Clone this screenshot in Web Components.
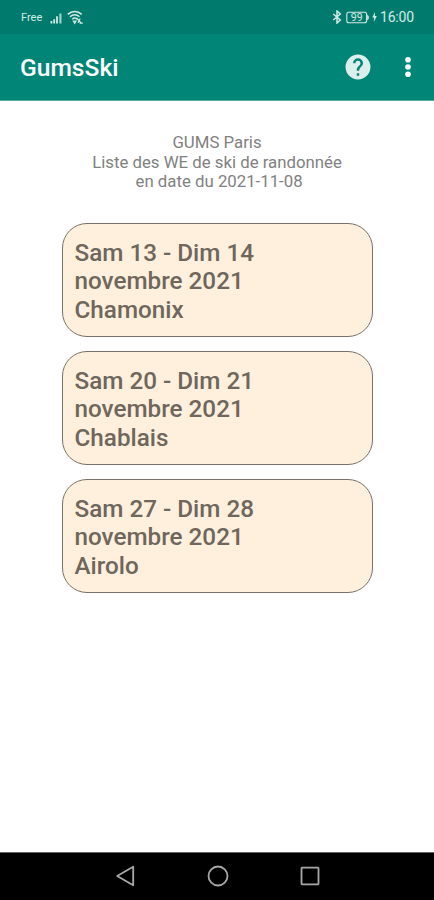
<!DOCTYPE html>
<html lang="fr">
<head>
<meta charset="utf-8">
<title>GumsSki</title>
<style>
html, body { margin: 0; height: 100%; }
body { font-family: Roboto, sans-serif; background: #fff; overflow: hidden; }
</style>
</head>
<body>
<gums-app></gums-app>
<script>
function define(name, html) {
  const template = document.createElement('template');
  template.innerHTML = html;
  customElements.define(name, class extends HTMLElement {
    constructor() {
      super();
      this.attachShadow({ mode: 'open' }).append(template.content.cloneNode(true));
    }
  });
}

define('status-bar', `
<style>
:host { display: flex; align-items: center; height: 34px; box-sizing: border-box; padding: 0 20px 0 21px; background: #007a6c; color: #d3ebe6; }
svg { display: block; flex: none; }
.carrier { font-size: 11px; line-height: 14px; width: 29px; padding-top: 1px; white-space: nowrap; }
.wifi { margin-left: 4px; }
.grow { flex: 1; }
.battery { margin-left: 4px; }
.bolt { margin-left: 2px; }
.time { font-size: 14px; line-height: 16px; margin-left: 3px; width: 34px; white-space: nowrap; letter-spacing: -0.2px; }
</style>
<span class="carrier">Free</span>
<svg width="13" height="13" viewBox="0 0 13 13" fill="currentColor"><path d="M.5 10h1.8v2.5H.5zM3.3 8.2h1.8v4.3H3.3zM6.1 5.2h1.8v7.3H6.1z"/><path d="M9.3 2.5h2.2v10H9.3z" opacity=".75"/></svg>
<svg class="wifi" width="17" height="15" viewBox="0 0 17 15" fill="none" stroke="currentColor" stroke-width="1.5"><path d="M.8 4.4C5 .6 10.5.6 14.7 4.4M3 6.8C6 4.2 9.6 4.2 12.5 6.8M5.3 9.2c1.4-1.3 3.4-1.3 4.8 0"/><path d="M6.4 11h2.6l-1.3 2.2zM9.5 8l4.6 4.8M13.2 8.5L11 12.8M12.6 13.2h3.2" stroke-width="1.2"/></svg>
<span class="grow"></span>
<svg width="10" height="14" viewBox="0 0 10 14" fill="none" stroke="currentColor" stroke-width="1.5"><path d="M1.3 4l7 6L5 13V1l3.3 3-7 6"/></svg>
<svg class="battery" width="24" height="13" viewBox="0 0 24 13"><rect x=".8" y="1.3" width="19.8" height="10.4" rx="2" fill="none" stroke="currentColor" stroke-width="1.1"/><path d="M21.3 4.2c1.7 0 1.7 4.6 0 4.6z" fill="currentColor" stroke="currentColor" stroke-width=".6"/><text x="10.7" y="10.2" text-anchor="middle" font-family="Roboto, sans-serif" font-size="10.5" fill="currentColor">99</text></svg>
<svg class="bolt" width="5" height="10" viewBox="0 0 5 10" fill="currentColor"><path d="M3 0L.3 5.6h1.8L1.8 10 4.8 4H2.9z"/></svg>
<span class="time">16:00</span>`);

define('app-bar', `
<style>
:host { display: flex; align-items: center; height: 67px; box-sizing: border-box; padding: 0 20px; background: #008577; color: #fff; border-bottom: 1px solid #58a99f; }
h1 { margin: 0; flex: 1; font-size: 24.6px; line-height: 30px; font-weight: 500; padding-top: 1px; }
svg { display: block; flex: none; }
.help { margin-right: 31.5px; }
</style>
<h1><slot></slot></h1>
<svg class="help" width="26" height="26" viewBox="0 0 24 24" fill="#dcefec"><path d="M12 .5a11.5 11.5 0 1 0 0 23 11.5 11.5 0 0 0 0-23zm1.15 19.55h-2.3v-2.3h2.3zm2.38-8.91l-1.03 1.06c-.83.84-1.35 1.53-1.35 3.25h-2.3v-.58c0-1.26.52-2.41 1.35-3.25l1.43-1.45c.42-.41.67-.99.67-1.62a2.3 2.3 0 1 0-4.6 0H7.4a4.6 4.6 0 1 1 9.2 0c0 1.01-.41 1.93-1.07 2.59z"/></svg>
<svg width="12" height="22" viewBox="0 0 12 22" fill="#fff"><circle cx="6" cy="3.7" r="2.8"/><circle cx="6" cy="11" r="2.8"/><circle cx="6" cy="18.3" r="2.8"/></svg>`);

define('list-heading', `
<style>
:host { display: block; padding-top: 32px; font-size: 16.8px; line-height: 19.6px; color: #818181; text-align: center; }
</style><slot></slot>`);

define('outing-card', `
<style>
:host { display: block; box-sizing: border-box; width: 311px; height: 114px; padding: 15px 12px 0 11.5px; border: 1px solid #77716a; border-radius: 25px; background: #fff0dd; color: #6f665c; font-size: 24.25px; line-height: 28.6px; font-weight: 500; }
div { width: 200px; white-space: nowrap; }
</style>
<div><slot name="days"></slot></div><div><slot name="month"></slot></div><div><slot name="place"></slot></div>`);

define('nav-bar', `
<style>
:host { display: flex; justify-content: center; align-items: center; gap: 68px; height: 48px; box-sizing: border-box; padding: 0 0 2px 1px; background: #000; border-top: 1px solid #666; }
svg { display: block; fill: none; stroke: #a8a8a8; stroke-width: 1.8; stroke-linejoin: round; }
</style>
<svg width="24" height="24" viewBox="0 0 24 24"><path d="M3.2 12L19.2 2.7v18.6z"/></svg>
<svg width="24" height="24" viewBox="0 0 24 24"><circle cx="12" cy="12" r="9.5"/></svg>
<svg width="24" height="24" viewBox="0 0 24 24"><rect x="3.5" y="3.7" width="17" height="16.6" rx=".7"/></svg>`);

define('gums-app', `
<style>
:host { display: flex; flex-direction: column; width: 434px; height: 900px; background: #fff; }
main { flex: 1; display: flex; flex-direction: column; }
section { display: flex; flex-direction: column; gap: 14px; margin: 31px 0 0 62px; }
</style>
<status-bar></status-bar>
<app-bar>GumsSki</app-bar>
<main>
<list-heading>GUMS Paris<br>Liste des WE de ski de randonnée<br><span>&nbsp;en date du 2021-11-08</span></list-heading>
<section>
<outing-card><span slot="days">Sam 13 - Dim 14</span><span slot="month">novembre 2021</span><span slot="place">Chamonix</span></outing-card>
<outing-card><span slot="days">Sam 20 - Dim 21</span><span slot="month">novembre 2021</span><span slot="place">Chablais</span></outing-card>
<outing-card><span slot="days">Sam 27 - Dim 28</span><span slot="month">novembre 2021</span><span slot="place">Airolo</span></outing-card>
</section>
</main>
<nav-bar></nav-bar>`);
</script>
</body>
</html>
